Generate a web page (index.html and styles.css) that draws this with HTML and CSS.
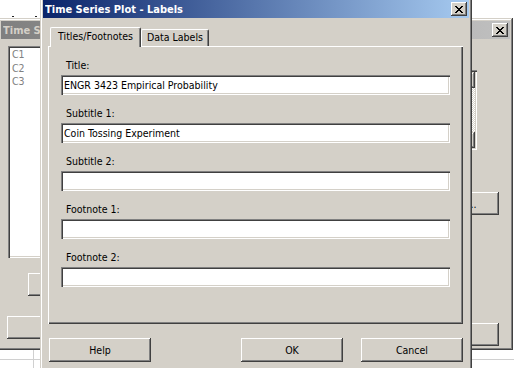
FILE: index.html
```html
<!DOCTYPE html>
<html lang="en">
<head>
  <meta charset="UTF-8" />
  <title>Time Series Plot - Labels</title>
  <link rel="stylesheet" href="styles.css">
</head>
<body>
  <div class="sheet"></div>

  <!-- Parent dialog (inactive, behind) -->
  <div class="win win-back">
    <div class="caption inactive">
      <span class="caption-text">Time Series Plot - Simple</span>
      <button class="cap-close">
        <svg width="8" height="7" viewBox="0 0 8 7" shape-rendering="crispEdges"><path d="M0 0h2v1h-2zM6 0h2v1h-2zM1 1h2v1h-2zM5 1h2v1h-2zM2 2h4v1h-4zM3 3h2v1h-2zM2 4h4v1h-4zM1 5h2v1h-2zM5 5h2v1h-2zM0 6h2v1h-2zM6 6h2v1h-2z" fill="#000"/></svg>
      </button>
    </div>
    <div class="back-body">
      <div class="back-left">
        <div class="listbox">
          <div>C1</div>
          <div>C2</div>
          <div>C3</div>
        </div>
        <button class="btn btn-select">Select</button>
        <button class="btn btn-wide">Help</button>
      </div>
      <div class="back-right">
        <div class="scrollbox">
          <div class="vscroll">
            <span class="sb-btn"></span>
            <span class="sb-track"></span>
            <span class="sb-btn"></span>
          </div>
        </div>
        <button class="btn btn-opts">Data Options...</button>
        <button class="btn btn-ok2">OK</button>
      </div>
    </div>
  </div>

  <!-- Labels dialog (active) -->
  <div class="win win-front">
    <div class="caption">
      <span class="caption-text">Time Series Plot - Labels</span>
      <button class="cap-close">
        <svg width="8" height="7" viewBox="0 0 8 7" shape-rendering="crispEdges"><path d="M0 0h2v1h-2zM6 0h2v1h-2zM1 1h2v1h-2zM5 1h2v1h-2zM2 2h4v1h-4zM3 3h2v1h-2zM2 4h4v1h-4zM1 5h2v1h-2zM5 5h2v1h-2zM0 6h2v1h-2zM6 6h2v1h-2z" fill="#000"/></svg>
      </button>
    </div>
    <div class="front-body">
      <div class="tabs">
        <div class="tab tab-active">Titles/Footnotes</div>
        <div class="tab">Data Labels</div>
      </div>
      <div class="panel">
        <div class="field">
          <label for="title">Title:</label>
          <input type="text" id="title" value="ENGR 3423 Empirical Probability" />
        </div>
        <div class="field">
          <label for="sub1">Subtitle 1:</label>
          <input type="text" id="sub1" value="Coin Tossing Experiment" />
        </div>
        <div class="field">
          <label for="sub2">Subtitle 2:</label>
          <input type="text" id="sub2" value="" />
        </div>
        <div class="field">
          <label for="foot1">Footnote 1:</label>
          <input type="text" id="foot1" value="" />
        </div>
        <div class="field">
          <label for="foot2">Footnote 2:</label>
          <input type="text" id="foot2" value="" />
        </div>
      </div>
      <div class="actions">
        <button class="btn">Help</button>
        <button class="btn btn-ok">OK</button>
        <button class="btn btn-cancel">Cancel</button>
      </div>
    </div>
  </div>
</body>
</html>
```

FILE: styles.css
```css
body {
  margin: 0;
  width: 514px;
  height: 368px;
  overflow: hidden;
  position: relative;
  background: #fff;
  font-family: 'DejaVu Sans Condensed', 'Liberation Sans', Arial, sans-serif;
  font-size: 10.5px;
  color: #000;
}
.sheet {
  position: absolute;
  inset: 0;
  background:
    linear-gradient(#222, #222) 12px 16px / 2px 1px no-repeat,
    linear-gradient(#222, #222) 35px 16px / 2px 1px no-repeat,
    linear-gradient(#d0d0d0, #d0d0d0) 0 359px / 100% 1px no-repeat,
    linear-gradient(#d0d0d0, #d0d0d0) 33px 350px / 1px 18px no-repeat,
    #fff;
}
button {
  font-family: inherit;
  font-size: inherit;
  color: #000;
  border: none;
  background: #d4d0c8;
  padding: 0;
}
.btn, .cap-close {
  box-shadow: inset -1px -1px #404040, inset 1px 1px #fff, inset -2px -2px #808080, inset 2px 2px #d4d0c8;
}
.btn {
  width: 102px;
  height: 24px;
}
.win {
  position: absolute;
  box-sizing: border-box;
  padding: 3px;
  background: #d4d0c8;
  display: flex;
  flex-direction: column;
  box-shadow: inset -1px -1px #404040, inset 1px 1px #d4d0c8, inset -2px -2px #808080, inset 2px 2px #fff;
}
.win-back { left: -2px; top: 18px; width: 515px; height: 332px; }
.win-front { left: 40px; top: -3px; width: 432px; height: 380px; }

.caption {
  height: 18px;
  flex-shrink: 0;
  display: flex;
  align-items: center;
  padding: 0 2px 0 2px;
  font-family: 'DejaVu Sans Condensed', 'Liberation Sans', sans-serif;
  font-size: 11px;
  font-weight: bold;
  color: #fff;
  background: linear-gradient(to right, #0a246a, #a6caf0);
}
.caption.inactive {
  background: linear-gradient(to right, #808080, #c0c0c0);
  color: #d4d0c8;
}
.caption-text { flex: 1; white-space: nowrap; overflow: hidden; }
.cap-close {
  width: 16px;
  height: 14px;
  display: flex;
  align-items: center;
  justify-content: center;
}
.cap-close svg { display: block; margin-left: -1px; }

/* parent dialog */
.back-body {
  flex: 1;
  display: flex;
  justify-content: space-between;
  padding: 7px 11px 0 7px;
}
.back-left {
  width: 220px;
  display: flex;
  flex-direction: column;
  align-items: flex-start;
}
.listbox {
  width: 200px;
  height: 212px;
  box-sizing: border-box;
  padding: 2px 4px;
  line-height: 13.5px;
  background: #fff;
  color: #808080;
  box-shadow: inset 1px 1px #808080, inset 2px 2px #404040, inset -1px -1px #fff, inset -2px -2px #d4d0c8;
}
.btn-select { margin: 15px 0 0 20px; height: 23px; }
.btn-wide { margin: 20px 0 0 -1px; width: 120px; height: 23px; }
.back-right {
  display: flex;
  flex-direction: column;
  align-items: flex-end;
}
.scrollbox {
  width: 130px;
  height: 80px;
  margin: 24px 22px 0 0;
  box-sizing: border-box;
  padding: 2px;
  display: flex;
  justify-content: flex-end;
  background: #fff;
  box-shadow: inset 1px 1px #808080, inset 2px 2px #404040, inset -1px -1px #fff, inset -2px -2px #d4d0c8;
}
.vscroll {
  width: 16px;
  display: flex;
  flex-direction: column;
}
.sb-btn {
  height: 16px;
  background: #d4d0c8;
  box-shadow: inset -1px -1px #404040, inset 1px 1px #d4d0c8, inset -2px -2px #808080, inset 2px 2px #fff;
}
.sb-track {
  flex: 1;
  background: repeating-conic-gradient(#fff 0 25%, #d4d0c8 0 50%) 0 0 / 2px 2px;
}
.btn-opts { margin-top: 42px; width: 116px; height: 23px; }
.btn-ok2 { margin-top: 108px; height: 23px; }

/* labels dialog */
.front-body {
  padding: 0 6px 0 5px;
}
.tabs {
  display: flex;
  align-items: flex-end;
  height: 19px;
  margin-top: 9px;
  padding-left: 2px;
  position: relative;
  z-index: 1;
}
.tab {
  box-sizing: border-box;
  width: 68px;
  height: 17px;
  line-height: 15px;
  text-align: center;
  white-space: nowrap;
  border-top: 1px solid #fff;
  border-left: 1px solid #fff;
  border-right: 1px solid #404040;
  border-radius: 2px 2px 0 0;
  box-shadow: inset -1px 0 #808080;
  background: #d4d0c8;
}
.tab-active {
  width: 91px;
  height: 20px;
  line-height: 17px;
  margin-bottom: -1px;
}
.panel {
  box-sizing: border-box;
  height: 278px;
  padding: 12px 13px 0;
  box-shadow: inset 1px 1px #fff, inset -1px -1px #404040, inset -2px -2px #808080;
}
.field label {
  display: block;
  padding-left: 5px;
  line-height: 14px;
  margin-bottom: 3px;
}
.field input {
  display: block;
  box-sizing: border-box;
  width: 389px;
  height: 20px;
  margin-bottom: 11px;
  padding: 0 3px;
  border: none;
  outline: none;
  background: #fff;
  font-family: inherit;
  font-size: inherit;
  color: #000;
  box-shadow: inset 1px 1px #808080, inset 2px 2px #404040, inset -1px -1px #fff, inset -2px -2px #d4d0c8;
}
.actions {
  display: flex;
  margin-top: 14px;
  padding-left: 1px;
}
.btn-ok { margin-left: auto; }
.btn-cancel { margin-left: 18px; }
```
